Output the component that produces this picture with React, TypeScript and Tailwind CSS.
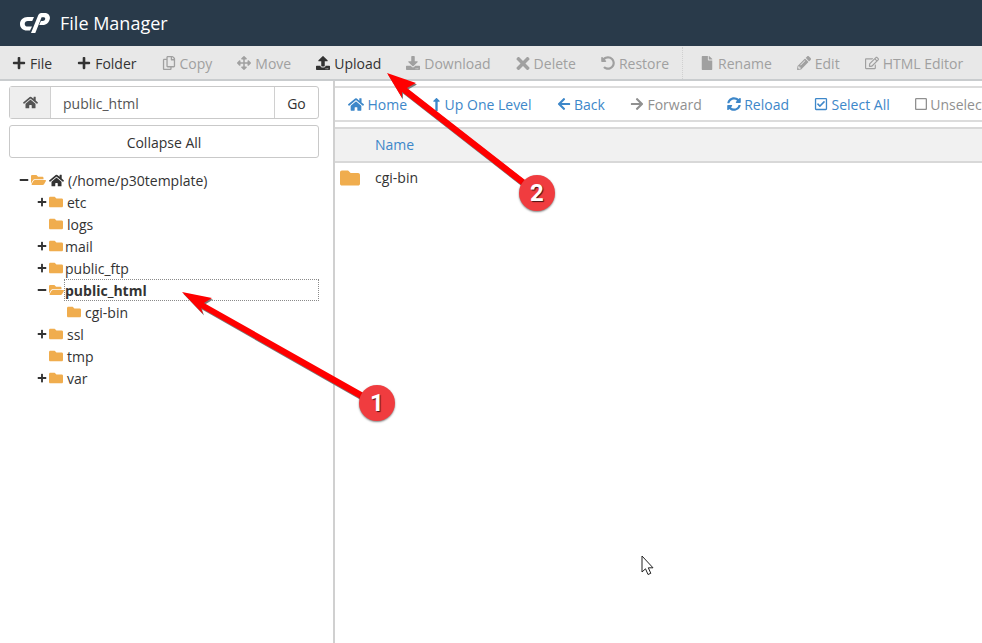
import {
  FaArrowLeft,
  FaArrowRight,
  FaArrowsAlt,
  FaDownload,
  FaFile,
  FaFolder,
  FaFolderOpen,
  FaHome,
  FaLongArrowAltUp,
  FaMinus,
  FaPencilAlt,
  FaPlus,
  FaRegCheckSquare,
  FaRegCopy,
  FaRegEdit,
  FaRegSquare,
  FaSyncAlt,
  FaTimes,
  FaUndoAlt,
  FaUpload,
} from 'react-icons/fa';
import type { IconType } from 'react-icons';

const fileActions: { label: string; icon: IconType; size?: string; active?: boolean }[] = [
  { label: 'File', icon: FaPlus, active: true },
  { label: 'Folder', icon: FaPlus, active: true },
  { label: 'Copy', icon: FaRegCopy },
  { label: 'Move', icon: FaArrowsAlt },
  { label: 'Upload', icon: FaUpload, active: true },
  { label: 'Download', icon: FaDownload },
  { label: 'Delete', icon: FaTimes, size: 'h-[19px] w-[14px]' },
  { label: 'Restore', icon: FaUndoAlt },
];

const editActions: { label: string; icon: IconType }[] = [
  { label: 'Rename', icon: FaFile },
  { label: 'Edit', icon: FaPencilAlt },
  { label: 'HTML Editor', icon: FaRegEdit },
];

const navActions: { label: string; icon: IconType; size: string; disabled?: boolean }[] = [
  { label: 'Home', icon: FaHome, size: 'h-[15px] w-[16px]' },
  { label: 'Up One Level', icon: FaLongArrowAltUp, size: 'h-[15px] w-[9px]' },
  { label: 'Back', icon: FaArrowLeft, size: 'h-[14px] w-[14px]' },
  { label: 'Forward', icon: FaArrowRight, size: 'h-[14px] w-[14px]', disabled: true },
  { label: 'Reload', icon: FaSyncAlt, size: 'h-[14px] w-[14px]' },
  { label: 'Select All', icon: FaRegCheckSquare, size: 'h-[14px] w-[14px]' },
  { label: 'Unselect All', icon: FaRegSquare, size: 'h-[14px] w-[12px]', disabled: true },
];

function TreeRow({
  name,
  toggle,
  indent = 'pl-[28px]',
  gap = 'ml-[4px]',
}: {
  name: string;
  toggle?: boolean;
  indent?: string;
  gap?: string;
}) {
  return (
    <div className={`flex h-[22px] items-center ${indent}`}>
      <span className="flex w-[12px] shrink-0 items-center">
        {toggle && <FaPlus className="h-[10px] w-[10px] text-[#333]" />}
      </span>
      <FaFolder className="h-[14px] w-[14px] shrink-0 text-[#f0ad4e]" />
      <span className={gap}>{name}</span>
    </div>
  );
}

function Annotation({ x, y, n }: { x: string; y: string; n: number }) {
  return (
    <div
      className={`absolute ${x} ${y} flex h-[36px] w-[36px] items-center justify-center rounded-full bg-[#f03c3f] text-[24px] leading-none font-bold text-white shadow-[0_1px_2px_rgba(0,0,0,0.5)] [font-family:Roboto,sans-serif] [text-shadow:1px_1px_1px_rgba(0,0,0,0.7)]`}
    >
      {n}
    </div>
  );
}

export default function App() {
  return (
    <div className="relative flex h-[643px] w-[982px] flex-col overflow-hidden bg-white text-[14px] text-[#333] [font-family:'Open_Sans',sans-serif]">
      {/* Header */}
      <header className="flex h-[46px] shrink-0 items-center bg-[#293a4a] pl-[20px]">
        <svg viewBox="0 0 30 20" className="h-[20px] w-[30px] text-white" fill="currentColor">
          <path d="M14 4H7.500C3.200 4 0 7 0 11c0 3.900 3 6.500 6.800 6.500H10l2-3.900H7.700c-1.700 0-3-1.100-3-2.700 0-1.800 1.300-3 3.100-3h4.400z" />
          <path d="M11 20L18.200 2.300C18.700 1 19.700 0 21.200 0h3.300c3.500 0 5.800 2.400 5.400 5.500-.5 3.800-3.500 6.500-7.200 6.500h-3.500l1.700-3.900h1.900c1.200 0 2.200-.8 2.400-2 .2-1.100-.5-1.900-1.700-1.900h-1.900L15.300 20z" />
        </svg>
        <span className="ml-[10px] text-[18px] text-white">File Manager</span>
      </header>

      {/* File actions */}
      <nav className="flex h-[35px] shrink-0 items-center gap-[25px] border-b-2 border-[#c9ccce] bg-[#e8e8e8] pt-[1px] pl-[12px]">
        {fileActions.map(({ label, icon: Icon, size, active }) => (
          <span
            key={label}
            className={`flex items-center gap-[4px] ${active ? 'text-[#333]' : 'text-[#a0a0a0]'}`}
          >
            <Icon className={size ?? 'h-[14px] w-[14px]'} />
            {label}
          </span>
        ))}
        <div className="-ml-[12px] flex h-full items-center gap-[25px] border-l border-dotted border-[#d0d0d0] pl-[17px]">
          {editActions.map(({ label, icon: Icon }) => (
            <span key={label} className="flex items-center gap-[4px] text-[#a0a0a0]">
              <Icon className="h-[14px] w-[14px]" />
              {label}
            </span>
          ))}
        </div>
      </nav>

      <div className="flex min-h-0 flex-1">
        {/* Sidebar */}
        <aside className="w-[335px] shrink-0 border-r-2 border-[#d0d0d0] pt-[5px] pr-[14px] pl-[9px]">
          <div className="flex h-[33px] items-stretch rounded-[3px] border border-[#c9c9c9]">
            <span className="flex w-[41px] items-center justify-center border-r border-[#d0d0d0] bg-[#eeeeee]">
              <FaHome className="h-[15px] w-[15px] text-[#555]" />
            </span>
            <span className="flex flex-1 items-center pt-[1px] pl-[12px] text-[#555]">public_html</span>
            <span className="flex w-[44px] items-center justify-center border-l border-[#d0d0d0] pt-[1px]">Go</span>
          </div>
          <button className="mt-[6px] block h-[33px] w-full rounded-[3px] border border-[#c9c9c9] bg-white pt-[1px] text-center">
            Collapse All
          </button>

          {/* Directory tree */}
          <div className="mt-[11px]">
            <div className="flex h-[22px] items-center pl-[10px]">
              <FaMinus className="h-[10px] w-[10px]" />
              <FaFolderOpen className="ml-[2px] h-[14px] w-[15px] text-[#f0ad4e]" />
              <FaHome className="ml-[3px] h-[15px] w-[15px]" />
              <span className="ml-[4px]">(/home/p30template)</span>
            </div>
            <TreeRow name="etc" toggle />
            <TreeRow name="logs" />
            <TreeRow name="mail" toggle gap="ml-[2px]" />
            <TreeRow name="public_ftp" toggle gap="ml-[2px]" />
            <div className="flex h-[22px] items-center pl-[28px]">
              <span className="flex w-[12px] shrink-0 items-center">
                <FaMinus className="h-[10px] w-[10px]" />
              </span>
              <FaFolderOpen className="h-[14px] w-[15px] shrink-0 text-[#f0ad4e]" />
              <span className="flex h-[22px] flex-1 items-center border border-dotted border-[#8a8a8a] font-bold">
                public_html
              </span>
            </div>
            <TreeRow name="cgi-bin" indent="pl-[46px]" />
            <TreeRow name="ssl" toggle />
            <TreeRow name="tmp" />
            <TreeRow name="var" toggle />
          </div>
        </aside>

        {/* File list */}
        <main className="min-w-0 flex-1 pt-[5px]">
          <div className="flex h-[36px] items-center gap-[25px] overflow-hidden border-y-2 border-[#dcdcdc] pl-[13px] whitespace-nowrap">
            {navActions.map(({ label, icon: Icon, size, disabled }) => (
              <span
                key={label}
                className={`flex shrink-0 items-center gap-[3.5px] ${disabled ? 'text-[#909090]' : 'text-[#3d87c9]'}`}
              >
                <Icon className={size} />
                {label}
              </span>
            ))}
          </div>
          <div className="mt-[5px] flex h-[36px] items-center border-y-2 border-[#d8d8d8] bg-[#f1f1f1] pb-[1px] pl-[40px] text-[#3d87c9]">
            Name
          </div>
          <div className="flex h-[30px] items-center pl-[5px]">
            <FaFolder className="h-[20px] w-[20px] text-[#f0ad4e]" />
            <span className="mb-[1px] ml-[15px]">cgi-bin</span>
          </div>
        </main>
      </div>

      {/* Screenshot annotations */}
      <svg className="pointer-events-none absolute inset-0 h-[643px] w-[982px]" viewBox="0 0 982 643">
        <g fill="#7a7a7a" transform="translate(1 1.5)">
          <polygon points="182,292 212,298 204,303 376,400 373,406 201,308 203,314" />
          <polygon points="387,73 416,83 407,88 538,190 534,195 402,92 402,98" />
        </g>
        <g fill="#ff0000">
          <polygon points="182,292 212,298 204,303 376,400 373,406 201,308 203,314" />
          <polygon points="387,73 416,83 407,88 538,190 534,195 402,92 402,98" />
        </g>
        {/* mouse pointer */}
        <path
          d="M642 556v16l3.500-3.200 2.500 5.700 2.800-1.200-2.500-5.500h4.700z"
          fill="#ffffff"
          stroke="#222222"
          strokeWidth="1"
        />
      </svg>
      <Annotation x="left-[359px]" y="top-[385px]" n={1} />
      <Annotation x="left-[519px]" y="top-[175px]" n={2} />
    </div>
  );
}
